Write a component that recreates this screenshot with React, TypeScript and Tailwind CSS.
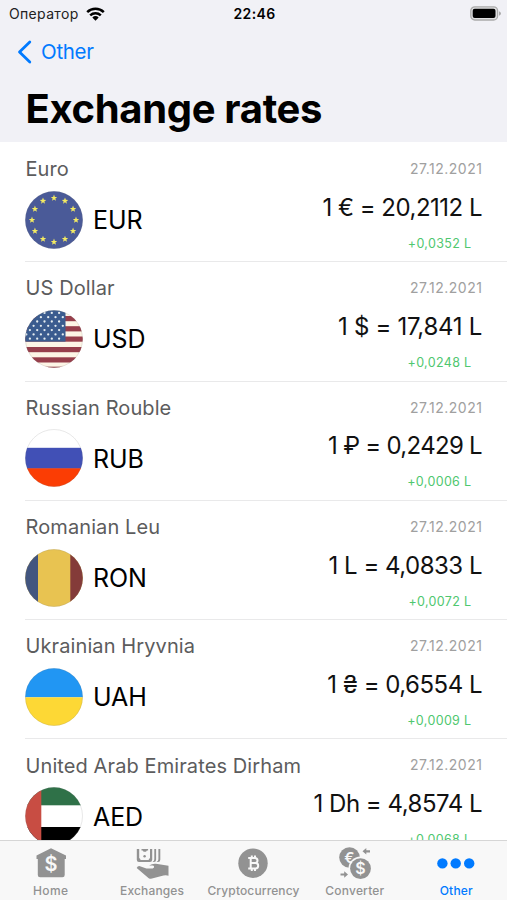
import type { ReactNode } from "react";

const star = "0,-3.4 0.9,-1.100 3.25,-1 1.35,0.5 2,2.800 0,1.4 -2,2.800 -1.35,0.5 -3.25,-1 -0.9,-1.1";

function EuFlag() {
    return (
        <>
            <rect width="58" height="58" fill="#4a5a98" />
            {Array.from({ length: 12 }, (_, i) => {
                const angle = (i * Math.PI) / 6;
                const x = 29 + 22 * Math.sin(angle);
                const y = 29 - 22 * Math.cos(angle);
                return <polygon key={i} points={star} transform={`translate(${x} ${y})`} fill="#f3ea62" />;
            })}
        </>
    );
}

function UsFlag() {
    return (
        <>
            <rect width="58" height="58" fill="#fdf5e6" />
            {[6, 16.2, 26.5, 37, 47.3, 56.7].map((y) => (
                <rect key={y} y={y} width="58" height="5.2" fill="#973f4c" />
            ))}
            <rect width="40.5" height="31.6" fill="#3b5c8f" />
            {Array.from({ length: 7 }, (_, row) =>
                Array.from({ length: 6 }, (_, col) => (
                    <circle
                        key={`${row}-${col}`}
                        cx={(row % 2 ? 1.300 : 4.900) + col * 7.3}
                        cy={2.900 + row * 4.3}
                        r={row % 2 || col < 5 ? 1.15 : 0}
                        fill="#e6edf0"
                    />
                ))
            )}
        </>
    );
}

const rates = [
    { name: "Euro", code: "EUR", rate: "1 € = 20,2112 L", change: "+0,0352 L", spacing: "tracking-[-0.5px]", flag: <EuFlag /> },
    { name: "US Dollar", code: "USD", rate: "1 $ = 17,841 L", change: "+0,0248 L", spacing: "tracking-[-0.28px]", flag: <UsFlag /> },
    {
        name: "Russian Rouble",
        code: "RUB",
        rate: "1 ₽ = 0,2429 L",
        change: "+0,0006 L",
        spacing: "tracking-[-0.7px]",
        flag: (
            <>
                <rect width="58" height="58" fill="#fff" />
                <rect y="18.8" width="58" height="21" fill="#4150b6" />
                <rect y="39.3" width="58" height="19" fill="#fb3d04" />
            </>
        ),
    },
    {
        name: "Romanian Leu",
        code: "RON",
        rate: "1 L = 4,0833 L",
        change: "+0,0072 L",
        spacing: "tracking-[-0.5px]",
        flag: (
            <>
                <rect width="58" height="58" fill="#e8c351" />
                <rect width="13" height="58" fill="#42557f" />
                <rect x="45.3" width="13" height="58" fill="#843b39" />
            </>
        ),
    },
    {
        name: "Ukrainian Hryvnia",
        code: "UAH",
        rate: "1 ₴ = 0,6554 L",
        change: "+0,0009 L",
        spacing: "tracking-[-0.5px]",
        flag: (
            <>
                <rect width="58" height="29.3" fill="#2196f3" />
                <rect y="29.3" width="58" height="29" fill="#fdd835" />
            </>
        ),
    },
    {
        name: "United Arab Emirates Dirham",
        code: "AED",
        rate: "1 Dh = 4,8574 L",
        change: "+0,0068 L",
        spacing: "tracking-[-0.5px]",
        flag: (
            <>
                <rect width="58" height="58" fill="#fff" />
                <rect width="58" height="18.3" fill="#2f7148" />
                <rect y="40" width="58" height="18" fill="#000" />
                <rect width="16.3" height="58" fill="#c84d43" />
            </>
        ),
    },
];

function Flag({ id, children }: { id: string; children: ReactNode }) {
    return (
        <svg viewBox="0 0 58 58" className="h-[58px] w-[58px] shrink-0">
            <clipPath id={id}>
                <circle cx="29" cy="29" r="28.8" />
            </clipPath>
            <g clipPath={`url(#${id})`}>{children}</g>
            <circle cx="29" cy="29" r="28.5" fill="none" stroke="#777" strokeOpacity="0.25" strokeWidth="0.7" />
        </svg>
    );
}

function HomeIcon() {
    return (
        <svg viewBox="0 0 36 36" className="h-9 w-9 fill-[#929292]">
            <path d="M18 3.200 3.500 10.500V14h1.300v16q0 2.300 2.300 2.300h22.300q2.300 0 2.300-2.300V14H33v-3.500z" />
            <text x="18.200" y="26.300" textAnchor="middle" className="fill-[#f8f8f8] text-[20px] font-semibold">$</text>
        </svg>
    );
}

function ExchangesIcon() {
    return (
        <svg viewBox="0 0 36 36" className="h-9 w-9 fill-[#929292]">
            <path d="M2.800 4h2.400v11h10.800V4h2.200v10.800q0 2.200-2.200 2.200H5q-2.200 0-2.200-2.200z" />
            <path d="M7.500 4h6.600v1.500h-1.200l-.9 1.300H9.600l-.9-1.300H7.500z" />
            <circle cx="10.600" cy="11.300" r="1.200" />
            <path d="M5 13q1.300.4 1.600 2H5zM16.200 13q-1.300.4-1.600 2h1.600z" />
            <path d="M20.300 4h1.800v10.800q0 2.200-2.200 2.200h-1.300q1.700-1 1.700-2.800zM24.400 4h1.900v10.800q0 2.200-2.200 2.200h-1.500q1.800-1 1.800-2.800z" />
            <path d="M2.700 23q1-2.300 3.300-1.800l6.400 2.300h6.200q1.700-.3 1.500-1.900-.2-1-1.700-1.100h-3.300q3.300-2.100 6.800-1.700l12.600 2v10q-2.300-.8-5-.2l-11.500 3q-1.700.4-3.300-.4z" />
        </svg>
    );
}

function CryptoIcon() {
    return (
        <svg viewBox="0 0 36 36" className="h-9 w-9 fill-[#929292]">
            <circle cx="18" cy="18.200" r="14.700" />
            <path
                d="M13.200 12.900h6.700a2.600 2.600 0 0 1 0 5.200h-4.200 4.800a2.700 2.700 0 0 1 0 5.400h-7.300M15.700 12.900v10.600M16.800 10.500v2.400M20 10.500v2.400M16.800 23.500v2.400M20 23.500v2.400"
                fill="none"
                stroke="#f8f8f8"
                strokeWidth="2"
            />
        </svg>
    );
}

function ConverterIcon() {
    return (
        <svg viewBox="0 0 36 36" className="h-9 w-9 fill-[#929292]">
            <circle cx="12.500" cy="12.500" r="10.300" />
            <text x="12.500" y="17.800" textAnchor="middle" className="fill-[#f8f8f8] text-[15px] font-semibold">€</text>
            <circle cx="23.500" cy="23.600" r="12" className="fill-[#f8f8f8]" />
            <circle cx="23.500" cy="23.600" r="10.400" />
            <text x="23.500" y="29.200" textAnchor="middle" className="fill-[#f8f8f8] text-[16px] font-semibold">$</text>
            <path d="M25.500 6.300l3.800-3.200v2.100h3.700v2.200h-3.700v2.100zM11 29.500l-3.800-3.200v2.100H3.500v2.200h3.700v2.100z" />
        </svg>
    );
}

function OtherIcon() {
    return (
        <svg viewBox="0 0 42 36" className="h-9 w-[42px] fill-[#007aff]">
            <circle cx="7.400" cy="18.400" r="5.200" />
            <circle cx="20.700" cy="18.400" r="5.200" />
            <circle cx="34.200" cy="18.400" r="5.200" />
        </svg>
    );
}

const tabs = [
    { label: "Home", icon: <HomeIcon />, className: "text-[#929292] tracking-[0.4px]" },
    { label: "Exchanges", icon: <ExchangesIcon />, className: "text-[#929292] tracking-[0.15px]" },
    { label: "Cryptocurrency", icon: <CryptoIcon />, className: "text-[#929292] tracking-[0.12px]" },
    { label: "Converter", icon: <ConverterIcon />, className: "text-[#929292] tracking-[0.2px]" },
    { label: "Other", icon: <OtherIcon />, className: "text-[#007aff] tracking-[0.2px]" },
];

function StatusBar() {
    return (
        <div className="grid h-7 grid-cols-3 items-center pl-[9px] pr-[6px] text-sm leading-7">
            <div className="flex items-center gap-[7px]">
                <span className="tracking-[0.33px] text-[#222]">Оператор</span>
                <svg viewBox="0 0 19 14" className="-mt-px h-[14px] w-[19px]">
                    <g fill="none" stroke="#000" strokeWidth="2.500">
                        <path d="M1.200 5.200a12 12 0 0 1 16.600 0" />
                        <path d="M4.200 8.400a7.700 7.700 0 0 1 10.600 0" />
                    </g>
                    <path d="M9.500 13.700 6.300 10.600a4.700 4.700 0 0 1 6.400 0z" />
                </svg>
            </div>
            <span className="-ml-px text-center font-semibold tracking-[0.4px]">22:46</span>
            <svg viewBox="0 0 31 15" className="-mt-px h-[15px] w-[31px] justify-self-end">
                <rect x="0.800" y="0.800" width="26.800" height="13.200" rx="4" fill="#e0e0e2" stroke="#aaa" strokeWidth="1.300" />
                <rect x="2.700" y="2.700" width="22.800" height="9.400" rx="2" />
                <path d="M29 5.200q2 .7 2 2.300t-2 2.300z" fill="#aaa" />
            </svg>
        </div>
    );
}

export default function App() {
    return (
        <div className="flex h-[900px] w-[507px] flex-col overflow-hidden bg-white font-['Inter','Liberation_Sans',sans-serif] text-black">
            <header className="h-[142px] shrink-0 bg-[#f1f1f6]">
                <StatusBar />
                <div className="flex h-12 items-center gap-[9.500px] pl-[16.500px] text-[#007aff]">
                    <svg viewBox="0 0 15 24" className="h-6 w-[15px]">
                        <path d="M12.800 2 2.500 12l10.300 10" fill="none" stroke="currentColor" strokeWidth="2.800" strokeLinecap="round" strokeLinejoin="round" />
                    </svg>
                    <span className="pt-px text-[20.5px] tracking-[-0.3px]">Other</span>
                </div>
                <h1 className="pl-[25.500px] text-[40px] font-bold leading-[66px] tracking-[-0.33px]">Exchange rates</h1>
            </header>

            <main className="min-h-0 flex-1 overflow-hidden pt-px">
                {rates.map((item) => (
                    <div key={item.code} className="flex h-[119.3px] pl-[25px]">
                        <div className="flex flex-1 justify-between border-b border-[#e9e9ea] pr-[25px]">
                            <div className="pt-[14.200px]">
                                <p className="whitespace-nowrap pl-[0.500px] text-xl leading-6 tracking-[0.1px] text-[#5c5c5d]">{item.name}</p>
                                <div className="mt-[9.500px] flex items-center gap-[10px]">
                                    <Flag id={`flag-${item.code}`}>{item.flag}</Flag>
                                    <span className="pt-[2.500px] text-[25px] tracking-[-0.1px]">{item.code}</span>
                                </div>
                            </div>
                            <div className="flex flex-col items-end whitespace-nowrap pt-4">
                                <time className="-mr-[0.500px] text-sm leading-5 tracking-[0.52px] text-[#a0a0a0]">27.12.2021</time>
                                <p className={`mt-[12.700px] text-2xl leading-8 text-[#111] ${item.spacing}`}>{item.rate}</p>
                                <p className="mr-[10.500px] mt-3 text-[12.5px] leading-4 tracking-[0.35px] text-[#4fc76f]">{item.change}</p>
                            </div>
                        </div>
                    </div>
                ))}
            </main>

            <nav className="grid h-[60px] shrink-0 grid-cols-5 border-t border-[#d6d6d6] bg-[#f8f8f8]">
                {tabs.map((tab) => (
                    <div key={tab.label} className={`flex flex-col items-center pt-1 text-xs font-medium ${tab.className}`}>
                        {tab.icon}
                        <span className="mt-[2px] leading-4">{tab.label}</span>
                    </div>
                ))}
            </nav>
        </div>
    );
}
